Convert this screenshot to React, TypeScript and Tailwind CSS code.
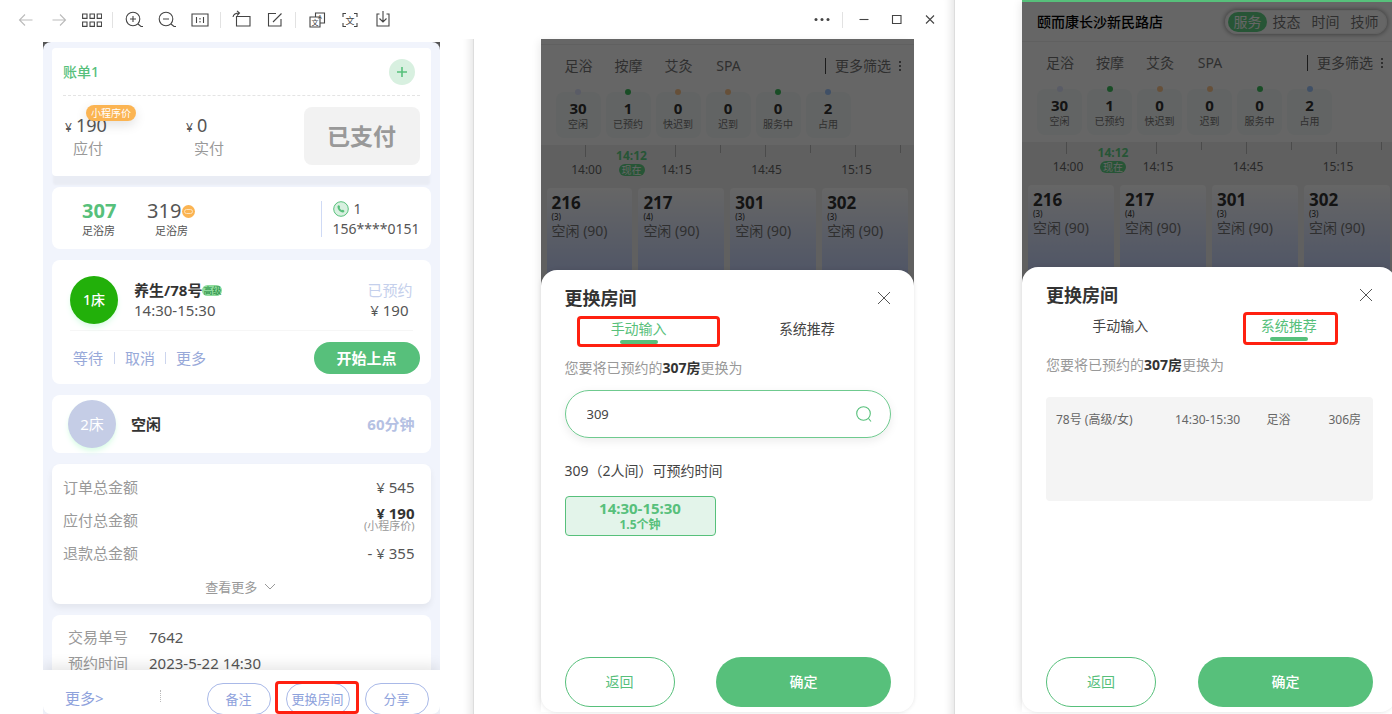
import React, { useState } from 'react';
import clsx from 'clsx';

const statuses = [
  { count: 30, label: '空闲', dot: 'bg-[#e0e6ff]' },
  { count: 1, label: '已预约', dot: 'bg-[#40c060]' },
  { count: 0, label: '快迟到', dot: 'bg-[#ffc890]' },
  { count: 0, label: '迟到', dot: 'bg-[#ffc890]' },
  { count: 0, label: '服务中', dot: 'bg-[#40c060]' },
  { count: 2, label: '占用', dot: 'bg-[#a0c8ff]' },
];

const rooms = [
  { no: '216', beds: 3 },
  { no: '217', beds: 4 },
  { no: '301', beds: 3 },
  { no: '302', beds: 3 },
];

const times = ['14:00', '14:15', '14:45', '15:15'];
const ticks = ['w-[90px] h-3', 'w-[45px] h-3', 'w-[45px] h-2', 'w-[45px] h-3', 'w-[45px] h-2', 'w-[45px] h-3', 'w-[1px] h-2'];

const Icon = ({ children, className }: { children: React.ReactNode; className?: string }) => (
  <svg viewBox="0 0 20 20" className={clsx('w-5 h-5', className)} fill="none" stroke="currentColor" strokeWidth="1.1">
    {children}
  </svg>
);

const ToolButton = ({ label, children, disabled }: { label: string; children: React.ReactNode; disabled?: boolean }) => (
  <button
    aria-label={label}
    disabled={disabled}
    className={clsx('w-[33px] h-8 flex items-center justify-center shrink-0', disabled ? 'text-[#bbb]' : 'text-[#444]')}
  >
    <Icon>{children}</Icon>
  </button>
);

const ToolDivider = () => <span className="w-px h-4 mx-1 bg-[#e2e2e2] shrink-0" />;

const Toolbar = () => (
  <div className="h-[39px] shrink-0 flex items-center pl-[9px] pr-2">
    <ToolButton label="Back" disabled>
      <path d="M16.500 10H4M9 4.500 3.500 10 9 15.500" />
    </ToolButton>
    <ToolButton label="Forward" disabled>
      <path d="M3.500 10H16M11 4.500 16.500 10 11 15.500" />
    </ToolButton>
    <ToolButton label="Thumbnails">
      <path d="M.6 4h4.400v4.400H.6zM8 4h4.400v4.400H8zM15.200 4h4.400v4.400h-4.400zM.6 12h4.400v4.400H.6zM8 12h4.400v4.400H8zM15.200 12h4.400v4.400h-4.400z" />
    </ToolButton>
    <ToolDivider />
    <ToolButton label="Zoom in">
      <circle cx="9" cy="9" r="6.800" />
      <path d="M6 9h6M9 6v6M14 14l3 2.500h2" />
    </ToolButton>
    <ToolButton label="Zoom out">
      <circle cx="9" cy="9" r="6.800" />
      <path d="M6 9h6M14 14l3 2.500h2" />
    </ToolButton>
    <ToolButton label="Actual size">
      <path d="M2 4h16v12H2zM6.500 7v6M13.500 7v6M10 8v1.500M10 11v1.500" />
    </ToolButton>
    <ToolDivider />
    <ToolButton label="Rotate">
      <path d="M4.500 6.500h13.500v9.500h-13.500zM1 7C1.500 4 3.500 3 7.500 3M5 .8 7.500 3 5 5.500" />
    </ToolButton>
    <ToolButton label="Edit">
      <path d="M11 3.500H3.500v12.500H16V9M8 12 16.500 3.500" />
    </ToolButton>
    <ToolDivider />
    <ToolButton label="Translate">
      <path d="M8.500 7V3h9v10h-4M3 7h10v10H3z" />
      <text x="4.500" y="15" fontSize="7" fill="currentColor" stroke="none">文</text>
      <text x="11" y="9" fontSize="6" fill="currentColor" stroke="none">A</text>
    </ToolButton>
    <ToolButton label="Extract text">
      <path d="M6 3.500H3V7M14 3.500h3V7M6 16.500H3V13M14 16.500h3V13" />
      <text x="5.500" y="13.500" fontSize="9" fill="currentColor" stroke="none">文</text>
    </ToolButton>
    <ToolButton label="Download">
      <path d="M6.500 4H4v12h12V4h-2.500M10 1v10.500M6.500 8.500l3.500 3.500L13.500 8.500" />
    </ToolButton>
    <div className="ml-auto flex items-center">
      <ToolButton label="More">
        <g fill="currentColor" stroke="none">
          <circle cx="4" cy="9.500" r="1.500" />
          <circle cx="10" cy="9.500" r="1.500" />
          <circle cx="16" cy="9.500" r="1.500" />
        </g>
      </ToolButton>
      <ToolDivider />
      <ToolButton label="Minimize">
        <path d="M5.500 9.500h9" />
      </ToolButton>
      <ToolButton label="Maximize">
        <path d="M5.500 5.500h8.500v8H5.500z" />
      </ToolButton>
      <ToolButton label="Close">
        <path d="m6 5.500 8 8M14 5.500l-8 8" />
      </ToolButton>
    </div>
  </div>
);

const SummaryRow = ({ label, children }: { label: string; children: React.ReactNode }) => (
  <div className="h-[33px] flex items-center justify-between">
    <span className="text-[#999]">{label}</span>
    <span className="text-right">{children}</span>
  </div>
);

const BillPhone = () => (
  <div className="flex-1 min-h-0 bg-[#555]">
    <div className="h-full flex flex-col overflow-hidden rounded-t-lg bg-[#f1f4fc] text-[15px] leading-5 text-[#555]">
      <div className="flex-1 min-h-0 overflow-hidden px-[9px] pt-[6px]">
        <section className="h-32 px-[11px] rounded bg-white shadow-[0_10px_2px_-1px_#e9ecf4]">
          <div className="h-12 flex items-center justify-between border-b border-dashed border-[#e4e4e4]">
            <h2 className="text-sm font-medium text-[#57c07b]">账单1</h2>
            <button aria-label="添加" className="w-[26px] h-[26px] mr-[5px] rounded-full bg-[#d8f0e0] text-[#57c07b] flex items-center justify-center">
              <svg viewBox="0 0 10 10" className="w-[10px] h-[10px]" stroke="currentColor" strokeWidth="1.600">
                <path d="M5 0v10M0 5h10" />
              </svg>
            </button>
          </div>
          <div className="flex pt-[11px]">
            <div className="relative w-[121px] pt-2">
              <div className="pl-[2px] flex items-baseline gap-1 text-[18px]"><span className="text-xs">¥</span>190</div>
              <div className="pl-[10px] pt-[2px] text-[#999]">应付</div>
              <span className="absolute left-[23px] -top-[2px] h-4 px-[5px] rounded-full bg-[#fbb452] text-white text-[10px] leading-4 shadow-[0_4px_12px_rgba(0,0,0,0.12)]">
                小程序价
              </span>
            </div>
            <div className="pt-2">
              <div className="pl-[2px] flex items-baseline gap-1 text-[18px]"><span className="text-xs">¥</span>0</div>
              <div className="pl-[10px] pt-[2px] text-[#999]">实付</div>
            </div>
            <button className="ml-auto w-[116px] h-[58px] rounded-lg bg-[#f2f2f2] text-[23px] font-bold text-[#999]">已支付</button>
          </div>
        </section>

        <section className="mt-[11px] h-[62px] rounded-lg bg-white flex pl-[30px] pr-[11px] pt-[14px]">
          <div className="w-[65px]">
            <div className="text-xl leading-5 font-bold text-[#57c07b]">307</div>
            <div className="text-[11px]">足浴房</div>
          </div>
          <div>
            <div className="flex items-center text-xl leading-5">
              319
              <span className="w-[13px] h-[13px] ml-[1px] rounded-full bg-[#fbb452] flex items-center justify-center">
                <span className="w-[9px] h-[5px] rounded-full border border-[#fde3bb]" />
              </span>
            </div>
            <div className="pl-2 text-[11px]">足浴房</div>
          </div>
          <div className="ml-auto h-9 pl-[11px] border-l border-[#cfdaf5] text-sm leading-4">
            <div className="flex items-center gap-[5px]">
              <svg viewBox="0 0 16 16" className="w-4 h-4">
                <circle cx="8" cy="8" r="7.300" fill="#d8f0e0" stroke="#57c07b" />
                <path d="M4.500 5.300c.3-.9 1.300-1.300 1.800-.8l.8 1.200c.2.400-.1.800-.5 1.200.4 1 1.200 1.800 2.300 2.300.4-.4.800-.7 1.200-.4l1.200.9c.4.600-.3 1.600-1.200 1.700C7.300 11.700 4.200 8.300 4.500 5.300z" fill="#57c07b" />
              </svg>
              1
            </div>
            <div className="pt-1">156****0151</div>
          </div>
        </section>

        <section className="mt-[11px] h-[124px] rounded-lg bg-white px-[18px] pt-4">
          <div className="h-[55px] flex items-start border-b border-[#f6f6f6]">
            <span className="w-12 h-12 rounded-full bg-[#22b00a] shadow-md shadow-green-100 text-white text-sm font-medium flex items-center justify-center">1床</span>
            <div className="pl-4 pt-1">
              <div className="flex items-center font-bold text-[#333]">
                养生/78号
                <span className="px-[1px] rounded-full bg-[#8edb9c] text-[9px] leading-[11px] font-normal text-[#238a3f]">高级</span>
              </div>
              <div>14:30-15:30</div>
            </div>
            <div className="ml-auto pt-1 text-right">
              <div className="text-[#c5d0ec]">已预约</div>
              <div className="pr-1">¥ 190</div>
            </div>
          </div>
          <div className="flex items-center pt-[11px] -mr-[7px] text-[#98a9d9]">
            <button className="px-[3px] mr-2">等待</button>
            <span className="w-px h-3 bg-[#ccd5ee]" />
            <button className="px-[3px] mx-[7px]">取消</button>
            <span className="w-px h-3 bg-[#ccd5ee]" />
            <button className="px-[3px] mx-[7px]">更多</button>
            <button className="ml-auto w-[106px] h-8 rounded-full bg-[#57c07b] font-bold text-white">开始上点</button>
          </div>
        </section>

        <section className="mt-[11px] h-[58px] rounded-lg bg-white flex items-center pl-4 pr-4">
          <span className="w-12 h-12 rounded-full bg-[#c5cde6] shadow-md shadow-green-100 text-white text-[15px] flex items-center justify-center">2床</span>
          <span className="pl-[15px] font-bold text-[#333]">空闲</span>
          <span className="ml-auto font-bold text-[#b5c1e3]">60分钟</span>
        </section>

        <section className="mt-[11px] h-[140px] rounded-lg bg-white pl-[11px] pr-4 pt-[6px] shadow-[0_4px_6px_rgba(0,0,0,0.06)]">
          <SummaryRow label="订单总金额">¥ 545</SummaryRow>
          <SummaryRow label="应付总金额">
            <span className="block leading-[13px] font-bold text-[#333]">¥ 190</span>
            <span className="block text-[11px] leading-3 text-[#999]">(小程序价)</span>
          </SummaryRow>
          <SummaryRow label="退款总金额">- ¥ 355</SummaryRow>
          <button className="mx-auto h-9 pl-1 flex items-center gap-[7px] text-[13px] text-[#999]">
            查看更多
            <svg viewBox="0 0 12 8" className="w-3 h-2" fill="none" stroke="currentColor">
              <path d="m1 1 5 5 5-5" />
            </svg>
          </button>
        </section>

        <dl className="mt-[11px] rounded-lg bg-white px-4 pt-[9px] grid grid-cols-[auto_1fr] gap-x-[21px] leading-[26px]">
          <dt className="text-[#999]">交易单号</dt>
          <dd>7642</dd>
          <dt className="text-[#999]">预约时间</dt>
          <dd>2023-5-22 14:30</dd>
        </dl>
      </div>

      <footer className="relative h-11 shrink-0 flex items-start bg-white pl-[22px] pr-[11px] text-[13px] text-[#8ea2dc] shadow-[0_-4px_14px_rgba(0,0,0,0.1)] rounded-b-lg">
        <button className="pt-[18px] text-[15px]">更多&gt;</button>
        <span className="h-3 mt-5 ml-14 border-l border-dotted border-[#bbb]" />
        <div className="ml-auto flex gap-[15px] pt-[13px]">
          <button className="w-16 h-8 rounded-full border border-[#a9b9e8]">备注</button>
          <button className="relative w-16 h-8 rounded-full border border-[#a9b9e8]">
            更换房间
            <span className="absolute -left-3 -right-[10px] -top-[3px] bottom-0 rounded-sm border-[3px] border-[#ff2010]" />
          </button>
          <button className="w-16 h-8 rounded-full border border-[#a9b9e8]">分享</button>
        </div>
      </footer>
    </div>
  </div>
);

const StoreHeader = () => (
  <header className="h-10 flex items-center justify-between pl-[15px] pr-[9px] border-b border-[#f0f0f0] text-sm">
    <h1 className="font-medium text-black">颐而康长沙新民路店</h1>
    <nav className="h-6 flex items-center px-[2px] rounded-full border border-[#f4f4f4] text-[#777] shadow-[0_0_4px_1px_rgba(0,0,0,0.35)]">
      {['服务', '技态', '时间', '技师'].map((item, i) => (
        <button key={item} className={clsx('w-[39px] h-5 leading-5 rounded-full', i === 0 && 'bg-[#62d588] text-white')}>
          {item}
        </button>
      ))}
    </nav>
  </header>
);

const Board = ({ header }: { header: React.ReactNode }) => (
  <div className="relative shrink-0 bg-white overflow-hidden text-[#777]">
    {header}
    <div className="h-[42px] flex items-center pl-[13px] pr-[13px] text-sm">
      {['足浴', '按摩', '艾灸', 'SPA'].map((item) => (
        <button key={item} className="w-[50px] text-center">{item}</button>
      ))}
      <button className="ml-auto flex items-center">
        <span className="w-px h-4 mr-[9px] bg-[#444]" />
        更多筛选
        <span className="ml-2 flex flex-col gap-[2px]">
          <span className="w-[2px] h-[2px] bg-[#777]" />
          <span className="w-[2px] h-[2px] bg-[#777]" />
          <span className="w-[2px] h-[2px] bg-[#777]" />
        </span>
      </button>
    </div>
    <ul className="flex gap-[5px] pl-[15px] pt-[5px]">
      {statuses.map((s) => (
        <li key={s.label} className="relative w-[45px] h-[46px] pt-2 rounded-lg bg-[#f5faf9] text-center">
          <span className={clsx('absolute left-1/2 -ml-[3px] -top-[3px] w-[6px] h-[6px] rounded-full', s.dot)} />
          <div className="text-[15px] leading-4 font-bold text-[#333]">{s.count}</div>
          <div className="text-[10px] leading-4">{s.label}</div>
        </li>
      ))}
    </ul>
    <div className="relative mt-[7px] h-10 bg-[#f1f1f1]">
      <div className="h-4 flex pl-11">
        {ticks.map((tick, i) => (
          <span key={i} className={clsx('shrink-0 border-l border-[#bbb]', tick)} />
        ))}
      </div>
      <div className="flex pl-px text-xs leading-[18px] text-[#666]">
        {times.map((time) => (
          <span key={time} className="w-[90px] shrink-0 text-center">{time}</span>
        ))}
      </div>
      <div className="absolute left-[74px] top-[3px] w-[34px] flex flex-col items-center">
        <span className="text-xs leading-4 font-bold text-[#62d588]">14:12</span>
        <span className="px-[3px] rounded-full bg-[#62d588] text-[10px] leading-3 text-white">现在</span>
      </div>
    </div>
    <div className="grid grid-cols-4 gap-[6px] px-[6px] pt-[3px] bg-[#f1f1f1]">
      {rooms.map((room) => (
        <div key={room.no} className="h-[98px] pl-[5px] pt-[6px] rounded-t bg-linear-to-b from-white to-[#cddaff] to-80%">
          <div className="text-[17px] leading-[18px] font-bold text-[#333]">{room.no}</div>
          <div className="text-[8px] leading-[10px] font-medium text-[#444]">({room.beds})</div>
          <div className="text-sm leading-[18px]">空闲 (90)</div>
        </div>
      ))}
    </div>
    <div className="absolute inset-0 bg-black/60" />
  </div>
);

type SheetProps = {
  active: number;
  highlight: string;
  children: React.ReactNode;
};

const RoomSheet = ({ active, highlight, children }: SheetProps) => (
  <div className="relative -mt-4 flex-1 min-h-0 flex flex-col pl-6 pr-[23px] pt-4 pb-[5px] rounded-2xl bg-white text-sm text-[#444] shadow-[0_0_4px_rgba(0,0,0,0.1)]">
    <div className="h-6 flex items-center justify-between">
      <h2 className="text-lg leading-6 font-bold text-[#333]">更换房间</h2>
      <button aria-label="关闭">
        <svg viewBox="0 0 14 14" className="w-[14px] h-[14px]" stroke="#555">
          <path d="m1 1 12 12M13 1 1 13" />
        </svg>
      </button>
    </div>
    <div role="tablist" className="grid grid-cols-2 -ml-[10px]">
      {['手动输入', '系统推荐'].map((tab, i) => (
        <button key={tab} role="tab" aria-selected={i === active} className={clsx('relative h-[38px]', i === active && 'text-[#57c07b]')}>
          {tab}
          {i === active && (
            <>
              <span className="absolute left-1/2 -ml-[19px] bottom-1 w-[38px] h-1 rounded-full bg-[#57c07b]" />
              <span className={clsx('absolute rounded-sm border-[3px] border-[#ff2010]', highlight)} />
            </>
          )}
        </button>
      ))}
    </div>
    <p className="h-10 leading-10 text-[#999]">
      您要将已预约的<b className="text-[#333]">307房</b>更换为
    </p>
    {children}
    <div className="mt-auto flex justify-between">
      <button className="w-[110px] h-[50px] rounded-full border border-[#57c07b] text-[#57c07b]">返回</button>
      <button className="w-[175px] h-[50px] rounded-full bg-[#57c07b] font-medium text-white">确定</button>
    </div>
  </div>
);

const ManualPhone = () => {
  const [room, setRoom] = useState('309');

  return (
    <div className="flex-1 min-h-0 flex flex-col">
      <Board header={<div className="h-[6px] border-b border-[#f0f0f0]" />} />
      <RoomSheet active={0} highlight="left-[22px] right-[3px] top-[6px] bottom-px">
        <label className="mt-[2px] h-12 flex items-center shrink-0 pl-[21px] pr-[18px] rounded-full border border-[#6fca8f] shadow-[0_3px_10px_rgba(0,0,0,0.08)]">
          <input
            aria-label="房间号"
            value={room}
            onChange={(e) => setRoom(e.target.value)}
            className="flex-1 min-w-0 text-[13px] outline-none"
          />
          <svg viewBox="0 0 16 16" className="w-4 h-4" fill="none" stroke="#57c07b" strokeWidth="1.100">
            <circle cx="7.500" cy="7.500" r="6.800" />
            <path d="m12.500 12.500 2.500 3" />
          </svg>
        </label>
        <p className="mt-5 h-[26px] leading-[26px]">309（2人间）可预约时间</p>
        <button className="mt-3 w-[151px] h-10 rounded border border-[#57c07b] bg-[#e3f4ea] font-bold text-[#57c07b]">
          <span className="block text-[15px] leading-[18px]">14:30-15:30</span>
          <span className="block text-xs leading-4">1.5个钟</span>
        </button>
      </RoomSheet>
    </div>
  );
};

const RecommendPhone = () => (
  <div className="flex-1 min-h-0 w-[calc(100%+4px)] flex flex-col border-t-2 border-[#57c07b]">
    <Board header={<StoreHeader />} />
    <RoomSheet active={1} highlight="left-[38px] right-[35px] top-[5px] bottom-0">
      <div className="mt-3 h-[104px] rounded bg-[#f4f4f4] pl-[10px] pr-3 pt-[10px]">
        <table className="w-full table-fixed text-xs leading-[26px] text-[#666]">
          <tbody>
            <tr>
              <td className="w-[39%]">78号 (高级/女)</td>
              <td className="w-[30%]">14:30-15:30</td>
              <td className="w-[15%]">足浴</td>
              <td className="text-right">306房</td>
            </tr>
          </tbody>
        </table>
      </div>
    </RoomSheet>
  </div>
);

export default function App() {
  return (
    <div className="h-screen grid grid-cols-[955fr_437fr] overflow-hidden bg-white font-['Noto_Sans','Noto_Sans_CJK_SC',sans-serif]">
      <div className="min-w-0 min-h-0 flex flex-col border-r border-[#ddd] shadow-[inset_-12px_0_10px_-10px_rgba(0,0,0,0.12)]">
        <Toolbar />
        <div className="flex-1 min-h-0 grid grid-cols-[474fr_481fr]">
          <div className="min-w-0 min-h-0 flex flex-col pl-[43px] pr-[33px] pt-[3px] border-r border-[#ddd] shadow-[inset_-12px_0_10px_-10px_rgba(0,0,0,0.12)]">
            <BillPhone />
          </div>
          <div className="min-w-0 min-h-0 flex flex-col pl-[67px] pr-10 pb-[2px]">
            <div className="flex-1 min-h-0 flex flex-col shadow-[-4px_0_8px_-2px_rgba(0,0,0,0.08)]">
              <ManualPhone />
            </div>
          </div>
        </div>
      </div>
      <div className="min-w-0 min-h-0 flex flex-col pl-[67px] pb-[2px] overflow-hidden">
        <div className="flex-1 min-h-0 flex flex-col shadow-[-4px_0_8px_-2px_rgba(0,0,0,0.08)]">
          <RecommendPhone />
        </div>
      </div>
    </div>
  );
}
